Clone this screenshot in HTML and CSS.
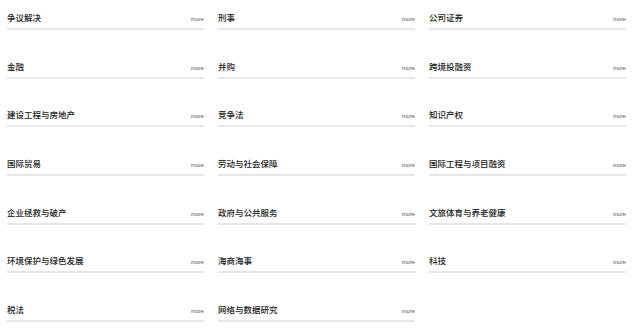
FILE: index.html
```html
<!DOCTYPE html>
<html lang="zh-CN">
<head>
<meta charset="utf-8">
<title>业务领域</title>
<link rel="stylesheet" href="styles.css">
</head>
<body>
<div class="grid">
  <div class="item"><div class="head"><span class="title">争议解决</span><span class="more">more</span></div></div>
  <div class="item"><div class="head"><span class="title">刑事</span><span class="more">more</span></div></div>
  <div class="item"><div class="head"><span class="title">公司证券</span><span class="more">more</span></div></div>
  <div class="item"><div class="head"><span class="title">金融</span><span class="more">more</span></div></div>
  <div class="item"><div class="head"><span class="title">并购</span><span class="more">more</span></div></div>
  <div class="item"><div class="head"><span class="title">跨境投融资</span><span class="more">more</span></div></div>
  <div class="item"><div class="head"><span class="title">建设工程与房地产</span><span class="more">more</span></div></div>
  <div class="item"><div class="head"><span class="title">竞争法</span><span class="more">more</span></div></div>
  <div class="item"><div class="head"><span class="title">知识产权</span><span class="more">more</span></div></div>
  <div class="item"><div class="head"><span class="title">国际贸易</span><span class="more">more</span></div></div>
  <div class="item"><div class="head"><span class="title">劳动与社会保障</span><span class="more">more</span></div></div>
  <div class="item"><div class="head"><span class="title">国际工程与项目融资</span><span class="more">more</span></div></div>
  <div class="item"><div class="head"><span class="title">企业拯救与破产</span><span class="more">more</span></div></div>
  <div class="item"><div class="head"><span class="title">政府与公共服务</span><span class="more">more</span></div></div>
  <div class="item"><div class="head"><span class="title">文旅体育与养老健康</span><span class="more">more</span></div></div>
  <div class="item"><div class="head"><span class="title">环境保护与绿色发展</span><span class="more">more</span></div></div>
  <div class="item"><div class="head"><span class="title">海商海事</span><span class="more">more</span></div></div>
  <div class="item"><div class="head"><span class="title">科技</span><span class="more">more</span></div></div>
  <div class="item"><div class="head"><span class="title">税法</span><span class="more">more</span></div></div>
  <div class="item"><div class="head"><span class="title">网络与数据研究</span><span class="more">more</span></div></div>
</div>
</body>
</html>
```

FILE: styles.css
```css
html, body {
  margin: 0;
  padding: 0;
  background: #ffffff;
}

.grid {
  display: grid;
  grid-template-columns: repeat(3, 197px);
  column-gap: 14px;
  row-gap: 29.67px;
  padding: 11px 0 0 7px;
}

.head {
  display: flex;
  justify-content: space-between;
  align-items: baseline;
  height: 12px;
  padding-bottom: 5px;
  border-bottom: 2px solid #e6e6e6;
}

.title {
  font-family: "Noto Sans CJK SC", "Noto Sans", sans-serif;
  font-size: 8.5px;
  line-height: 12px;
  font-weight: 500;
  color: #222222;
}

.more {
  font-family: "Liberation Sans", Arial, sans-serif;
  font-size: 5.7px;
  line-height: 12px;
  color: #555555;
}
```
